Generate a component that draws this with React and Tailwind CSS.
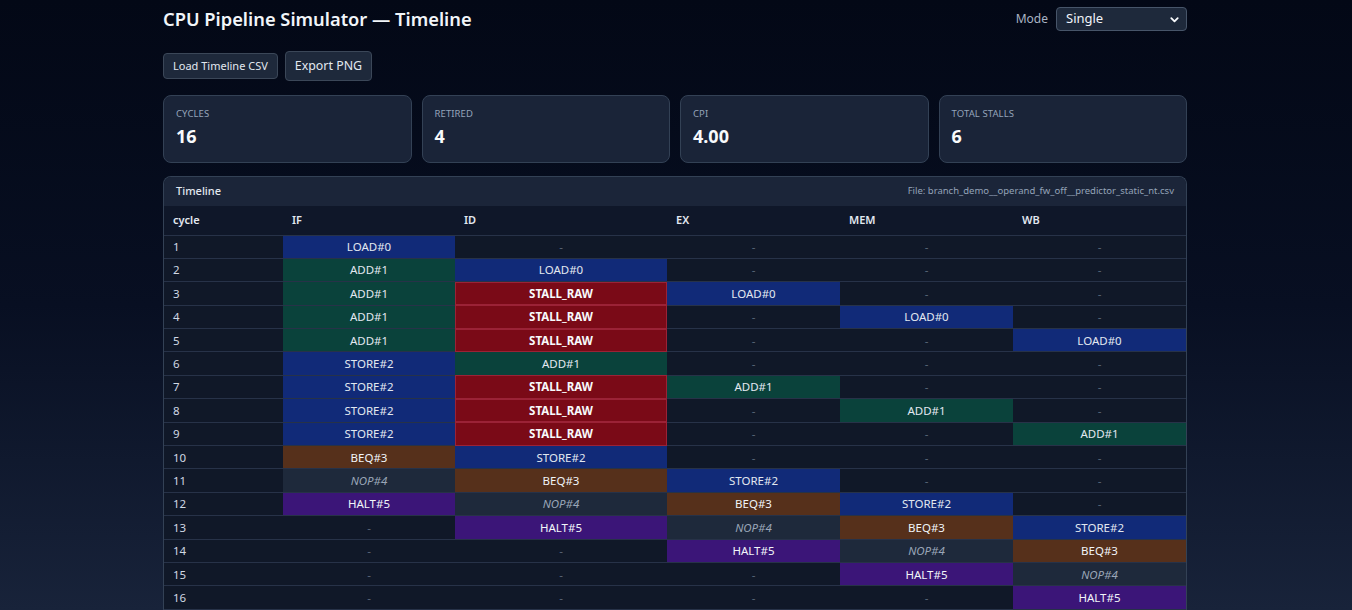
import React from "react";

const D = "-";
const rows = [
  ["LOAD#0", D, D, D, D],
  ["ADD#1", "LOAD#0", D, D, D],
  ["ADD#1", "STALL_RAW", "LOAD#0", D, D],
  ["ADD#1", "STALL_RAW", D, "LOAD#0", D],
  ["ADD#1", "STALL_RAW", D, D, "LOAD#0"],
  ["STORE#2", "ADD#1", D, D, D],
  ["STORE#2", "STALL_RAW", "ADD#1", D, D],
  ["STORE#2", "STALL_RAW", D, "ADD#1", D],
  ["STORE#2", "STALL_RAW", D, D, "ADD#1"],
  ["BEQ#3", "STORE#2", D, D, D],
  ["NOP#4", "BEQ#3", "STORE#2", D, D],
  ["HALT#5", "NOP#4", "BEQ#3", "STORE#2", D],
  [D, "HALT#5", "NOP#4", "BEQ#3", "STORE#2"],
  [D, D, "HALT#5", "NOP#4", "BEQ#3"],
  [D, D, D, "HALT#5", "NOP#4"],
  [D, D, D, D, "HALT#5"],
];

function cellClass(v) {
  if (v === D) return "bg-transparent text-[#5b6679]";
  if (v.startsWith("LOAD") || v.startsWith("STORE")) return "bg-[#112a78] text-[#e2e8f0]";
  if (v.startsWith("ADD")) return "bg-[#0a423b] text-[#e2e8f0]";
  if (v.startsWith("STALL")) return "bg-[#7a0a17] text-[#f8fafc] font-bold outline outline-1 -outline-offset-1 outline-[#9b2236]";
  if (v.startsWith("BEQ")) return "bg-[#56301b] text-[#f1f5f9]";
  if (v.startsWith("NOP")) return "bg-[#1e293b] text-[#9aa6b8] italic";
  if (v.startsWith("HALT")) return "bg-[#3b1578] text-[#f1f5f9]";
  return "";
}

const stats = [
  ["CYCLES", "16"],
  ["RETIRED", "4"],
  ["CPI", "4.00"],
  ["TOTAL STALLS", "6"],
];

export default function App() {
  return (
    <div
      className="min-h-[610px] w-full bg-gradient-to-b from-[#030816] via-[#080f22] to-[#18233a] text-[#e5e7eb]"
      style={{ fontFamily: '"Noto Sans", "Open Sans", sans-serif' }}
    >
      <div className="ml-[163px] w-[1024px] pt-[5px]">
        <div className="flex items-center justify-between h-[28px]">
          <h1 className="text-[18.3px] font-semibold text-[#f1f5f9] leading-none">
            CPU Pipeline Simulator — Timeline
          </h1>
          <div className="flex items-center gap-[8px]">
            <span className="text-[12px] text-[#aab4c4]">Mode</span>
            <div className="flex h-[24px] w-[131px] items-center justify-between rounded-[4px] border border-[#475569] bg-[#1e293b] pl-[9px] pr-[6px] text-[13px] text-[#f1f5f9]">
              <span>Single</span>
              <svg width="11" height="11" viewBox="0 0 24 24" fill="none" stroke="#f8fafc" strokeWidth="4" strokeLinecap="round" strokeLinejoin="round">
                <path d="M5 9l7 7 7-7" />
              </svg>
            </div>
          </div>
        </div>

        <div className="mt-[18px] flex items-center gap-[7px]">
          <button className="h-[26px] rounded-[4px] border border-[#3b4758] bg-[#1e293b] px-[9px] text-[11px] text-[#e2e8f0]">
            Load Timeline CSV
          </button>
          <button className="h-[30px] rounded-[4px] border border-[#3b4758] bg-[#1e293b] px-[9px] text-[12.4px] text-[#e2e8f0]">
            Export PNG
          </button>
        </div>

        <div className="mt-[14px] grid grid-cols-4 gap-[10px]">
          {stats.map(([l, v]) => (
            <div key={l} className="h-[68px] rounded-[8px] border border-[#334155] bg-[#1a2438] px-[12px] pt-[12px]">
              <div className="text-[9.5px] uppercase tracking-[0.01em] text-[#94a3b8] leading-[12px]">{l}</div>
              <div className="mt-[5px] text-[18px] font-bold text-[#f8fafc] leading-[22px]">{v}</div>
            </div>
          ))}
        </div>

        <div className="mt-[13px] overflow-hidden rounded-t-[8px] border border-b-0 border-[#334155] bg-[#101828]">
          <div className="flex h-[29px] items-center justify-between bg-[#1b2539] px-[12px]">
            <span className="text-[11px] font-medium text-[#e2e8f0]">Timeline</span>
            <span className="text-[9.5px] text-[#94a3b8]">File: branch_demo__operand_fw_off__predictor_static_nt.csv</span>
          </div>
          <table className="w-full border-collapse text-[11.5px]">
            <colgroup>
              <col className="w-[119px]" />
              <col className="w-[172px]" />
              <col className="w-[212px]" />
              <col className="w-[173px]" />
              <col className="w-[173px]" />
              <col />
            </colgroup>
            <thead>
              <tr className="h-[29px] bg-[#0f1729] text-left text-[11px] font-semibold text-[#e2e8f0]">
                {["cycle", "IF", "ID", "EX", "MEM", "WB"].map((h) => (
                  <th key={h} className="px-[9px] font-semibold border-b border-[#273248]">{h}</th>
                ))}
              </tr>
            </thead>
            <tbody>
              {rows.map((r, i) => (
                <tr key={i} className="h-[23.4px] border-b border-[#273248]">
                  <td className="px-[9px] text-[#d1d9e4]">{i + 1}</td>
                  {r.map((v, j) => (
                    <td key={j} className={"p-0 text-center " + cellClass(v)}>{v}</td>
                  ))}
                </tr>
              ))}
            </tbody>
          </table>
        </div>
      </div>
    </div>
  );
}
